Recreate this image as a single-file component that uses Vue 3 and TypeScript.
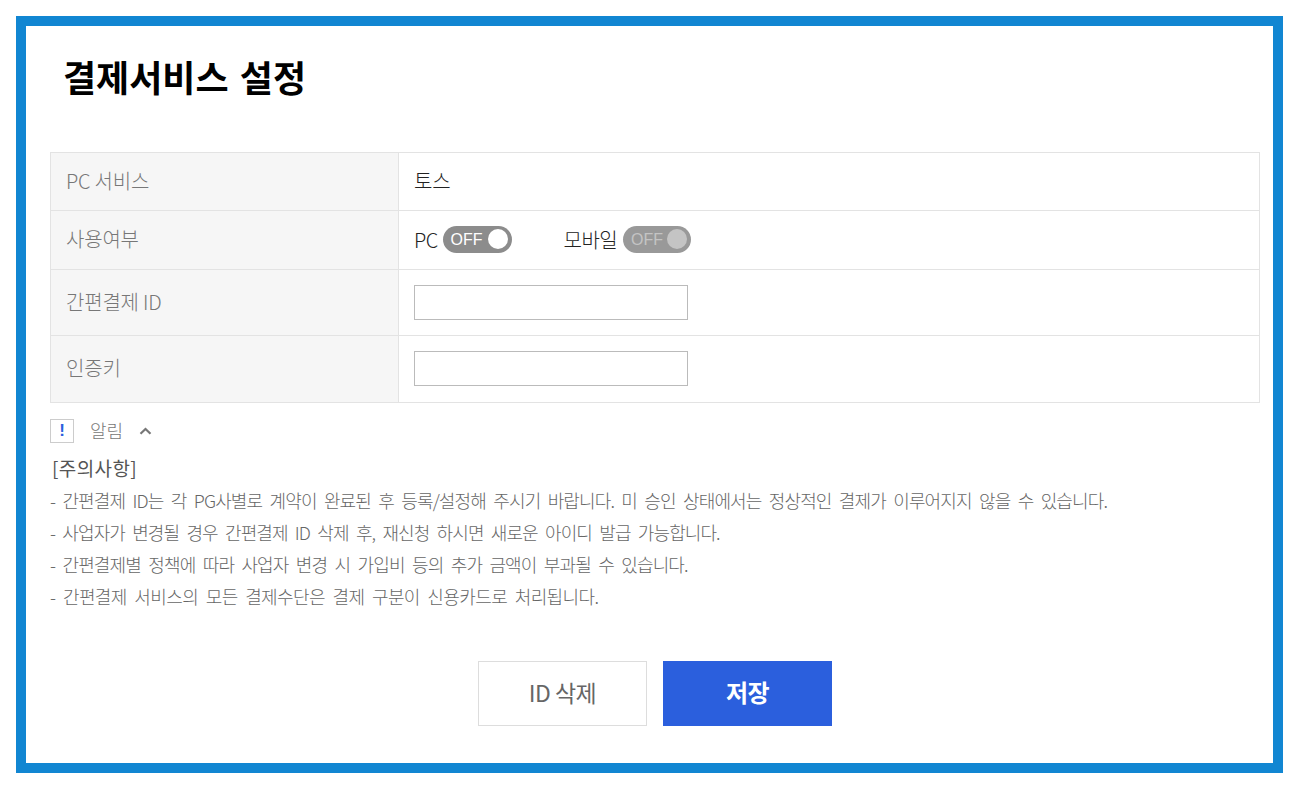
<script setup lang="ts">
const notices: string[] = [
  '- 간편결제 ID는 각 PG사별로 계약이 완료된 후 등록/설정해 주시기 바랍니다. 미 승인 상태에서는 정상적인 결제가 이루어지지 않을 수 있습니다.',
  '- 사업자가 변경될 경우 간편결제 ID 삭제 후, 재신청 하시면 새로운 아이디 발급 가능합니다.',
  '- 간편결제별 정책에 따라 사업자 변경 시 가입비 등의 추가 금액이 부과될 수 있습니다.',
  '- 간편결제 서비스의 모든 결제수단은 결제 구분이 신용카드로 처리됩니다.',
]
</script>

<template>
  <div class="frame">
    <h1 class="title">결제서비스 설정</h1>

    <div class="form-table">
      <div class="row row-s">
        <div class="label">PC 서비스</div>
        <div class="value">토스</div>
      </div>
      <div class="row row-s2">
        <div class="label">사용여부</div>
        <div class="value toggles">
          <span class="toggle-group">
            PC
            <span class="toggle"><em>OFF</em><i></i></span>
          </span>
          <span class="toggle-group">
            모바일
            <span class="toggle disabled"><em>OFF</em><i></i></span>
          </span>
        </div>
      </div>
      <div class="row row-l">
        <div class="label">간편결제 ID</div>
        <div class="value"><input class="field" type="text" /></div>
      </div>
      <div class="row row-l2">
        <div class="label">인증키</div>
        <div class="value"><input class="field" type="text" /></div>
      </div>
    </div>

    <div class="notice-head">
      <span class="notice-icon">!</span>
      <span class="notice-title">알림</span>
      <svg class="chevron" width="13" height="8" viewBox="0 0 13 8">
        <path d="M1.5 6.8 6.5 2l5 4.8" fill="none" stroke="#777" stroke-width="2.2" />
      </svg>
    </div>

    <div class="notice-body">
      <p class="notice-caption">[주의사항]</p>
      <p v-for="line in notices" :key="line">{{ line }}</p>
    </div>

    <div class="actions">
      <button class="btn" type="button">ID 삭제</button>
      <button class="btn primary" type="button">저장</button>
    </div>
  </div>
</template>

<style>
body {
  background: #fff;
}
</style>

<style scoped>
.frame {
  box-sizing: border-box;
  width: 1267px;
  height: 757px;
  margin: 16px 0 0 16px;
  padding: 0 13px 0 24px;
  border: 10px solid #1186d2;
  background: #fff;
  font-family: "Noto Sans CJK KR", "Liberation Sans", sans-serif;
  font-weight: 300;
  color: #222;
}

.title {
  margin: 0;
  padding: 23px 0 0 13px;
  height: 126px;
  box-sizing: border-box;
  font-size: 36px;
  line-height: 54px;
  font-weight: 700;
  letter-spacing: 0;
  word-spacing: 3px;
  color: #000;
}

.form-table {
  border: 1px solid #e3e3e3;
  border-bottom: 0;
}

.row {
  display: flex;
  border-bottom: 1px solid #e3e3e3;
}

.row-s { height: 57px; }
.row-s2 { height: 58px; }
.row-l { height: 65px; }
.row-l2 { height: 66px; }

.label {
  display: flex;
  align-items: center;
  box-sizing: border-box;
  width: 348px;
  padding: 0 0 3px 15px;
  border-right: 1px solid #e3e3e3;
  background: #f6f6f6;
  font-size: 20px;
  letter-spacing: -0.2px;
  color: #777;
}

.value {
  display: flex;
  align-items: center;
  padding-left: 15px;
  font-size: 20px;
  letter-spacing: -0.2px;
}

.row-s .value {
  padding-bottom: 3px;
}

.row-l2 .value {
  padding-bottom: 2px;
}

.toggles {
  gap: 52px;
  padding-bottom: 2px;
  letter-spacing: -0.6px;
}

.toggle-group {
  display: flex;
  align-items: center;
  gap: 6px;
}

.toggle-group:first-child {
  gap: 5px;
}

.toggle {
  display: flex;
  align-items: center;
  justify-content: space-between;
  box-sizing: border-box;
  width: 69px;
  height: 27px;
  padding: 0 4px 0 8px;
  border-radius: 14px;
  background: #8c8c8c;
}

.toggle em {
  padding-top: 2px;
  font-style: normal;
  font-family: "Liberation Sans", sans-serif;
  font-size: 16px;
  font-weight: 400;
  letter-spacing: 0;
  color: #fff;
}

.toggle i {
  width: 20px;
  height: 20px;
  border-radius: 50%;
  background: #fff;
}

.toggle.disabled {
  width: 68px;
  background: #999;
}

.toggle.disabled em {
  color: #c4c4c4;
}

.toggle.disabled i {
  background: #c4c4c4;
}

.field {
  box-sizing: border-box;
  width: 274px;
  height: 35px;
  border: 1px solid #bbb;
  background: #fff;
}

.notice-head {
  display: flex;
  align-items: center;
  height: 55px;
}

.notice-icon {
  display: flex;
  align-items: center;
  justify-content: center;
  box-sizing: border-box;
  width: 24px;
  height: 24px;
  border: 1px solid #ccc;
  font-family: "Liberation Sans", sans-serif;
  font-size: 17px;
  font-weight: 700;
  color: #2b5fdd;
}

.notice-title {
  margin-left: 16px;
  padding-bottom: 2px;
  font-size: 18px;
  color: #777;
}

.chevron {
  margin-left: 16px;
}

.notice-body {
  margin-top: -6px;
  font-size: 18px;
  line-height: 32px;
  letter-spacing: -0.87px;
  word-spacing: 4.2px;
  color: #666;
}

.notice-body p {
  margin: 0;
}

.notice-body p:nth-child(3) {
  letter-spacing: -0.91px;
}

.notice-body p:nth-child(4) {
  letter-spacing: -0.86px;
}

.notice-body p:nth-child(5) {
  letter-spacing: -0.61px;
}

.notice-body .notice-caption {
  padding-left: 2px;
  font-size: 19px;
  font-weight: 400;
  letter-spacing: 0.4px;
  color: #555;
}

.actions {
  display: flex;
  justify-content: center;
  gap: 16px;
  margin-top: 49px;
}

.btn {
  width: 169px;
  height: 65px;
  padding: 0 0 4px;
  border: 1px solid #ddd;
  background: #fff;
  font-family: inherit;
  font-size: 23px;
  font-weight: 400;
  letter-spacing: -0.5px;
  color: #666;
}

.btn.primary {
  border-color: #2b5fdd;
  background: #2b5fdd;
  font-size: 24px;
  font-weight: 700;
  color: #fff;
}
</style>
